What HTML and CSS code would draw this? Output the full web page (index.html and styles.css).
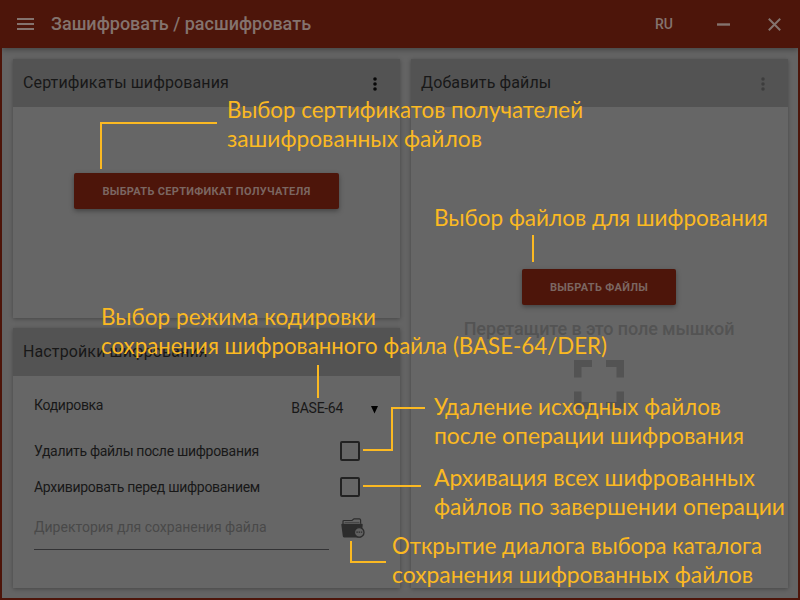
FILE: index.html
```
<!DOCTYPE html>
<html lang="ru">
<head>
<meta charset="utf-8">
<title>Зашифровать / расшифровать</title>
<link rel="stylesheet" href="styles.css">
</head>
<body>
<div class="window">
  <header class="bar">
    <svg class="menu" width="17" height="12" viewBox="0 0 17 12"><path d="M0 1h17M0 6h17M0 11h17" stroke="currentColor" stroke-width="2"/></svg>
    <h1 class="title">Зашифровать / расшифровать</h1>
    <span class="lang">RU</span>
    <svg class="min" width="13" height="13" viewBox="0 0 13 13"><path d="M0 6.500h13" stroke="currentColor" stroke-width="2.400"/></svg>
    <svg class="close" width="13" height="13" viewBox="0 0 13 13"><path d="M.8 .8l11.4 11.4M12.2 .8L.8 12.2" stroke="currentColor" stroke-width="2"/></svg>
  </header>
  <main class="content">
    <div class="column">
      <section class="card certs">
        <div class="card-head"><span>Сертификаты шифрования</span>
          <svg class="dots" width="4" height="14" viewBox="0 0 4 14"><circle cx="2" cy="2" r="1.8"/><circle cx="2" cy="7" r="1.8"/><circle cx="2" cy="12" r="1.8"/></svg>
        </div>
        <div class="certs-body"><button class="btn btn-cert">ВЫБРАТЬ СЕРТИФИКАТ ПОЛУЧАТЕЛЯ</button></div>
      </section>
      <section class="card settings">
        <div class="card-head"><span>Настройки шифрования</span></div>
        <div class="form">
          <div class="row row-encoding"><span>Кодировка</span>
            <span class="select">BASE-64<svg width="7" height="8" viewBox="0 0 7 8"><path d="M0 0h7L3.5 7.5z"/></svg></span>
          </div>
          <div class="row"><span>Удалить файлы после шифрования</span><i class="box"></i></div>
          <div class="row"><span>Архивировать перед шифрованием</span><i class="box"></i></div>
          <div class="directory">
            <span class="field">Директория для сохранения файла</span>
            <svg class="folder" width="24" height="21" viewBox="0 0 24 21">
              <path d="M2 6V3.6Q2 2.5 3.1 2.5H11L13 .9H18.4Q19.5 .9 19.6 2V5.8" fill="none" stroke="#2c2c2c" stroke-width="1.2"/>
              <path d="M3.6 4.4H18.4" stroke="#3c3c3c" stroke-width=".8"/>
              <path d="M.3 6.6Q.2 5.7 1.200 5.7H20.8Q21.8 5.7 21.7 6.7L20.7 18.3Q20.6 19.4 19.5 19.4H3Q1.9 19.4 1.8 18.3Z" fill="#2c2c2c"/>
              <circle cx="18.2" cy="14.4" r="4.800" fill="#606060" stroke="#2c2c2c" stroke-width="1.3"/>
              <path d="M15.4 14.2h5.8" stroke="#2c2c2c" stroke-width="1.2" stroke-dasharray="1.4 .8"/>
            </svg>
          </div>
        </div>
      </section>
    </div>
    <section class="card files">
      <div class="card-head"><span>Добавить файлы</span>
        <svg class="dots muted" width="4" height="14" viewBox="0 0 4 14"><circle cx="2" cy="2" r="1.7"/><circle cx="2" cy="7" r="1.7"/><circle cx="2" cy="12" r="1.7"/></svg>
      </div>
      <div class="drop">
        <button class="btn btn-files">ВЫБРАТЬ ФАЙЛЫ</button>
        <p class="hint">Перетащите в это поле мышкой</p>
        <svg class="frame" width="50" height="49" viewBox="0 0 50 49"><path d="M0 0h18v7H7.5v10.5H0zM32 0h18v17.5h-7.5V7H32zM0 31.5h7.5V42H18v7H0zM42.5 31.5H50V49H32v-7h10.5z"/></svg>
      </div>
    </section>
  </main>
</div>
<svg class="notes" width="800" height="600" viewBox="0 0 800 600">
  <g class="lines">
    <path d="M101 169V123H217"/>
    <path d="M533 235V262"/>
    <path d="M318 365V398"/>
    <path d="M363 450H392V408H425"/>
    <path d="M363 486H421"/>
    <path d="M351 541V562H386"/>
  </g>
  <g class="labels">
    <text x="227" y="118" textLength="356" lengthAdjust="spacingAndGlyphs">Выбор сертификатов получателей</text>
    <text x="227" y="147" textLength="255" lengthAdjust="spacingAndGlyphs">зашифрованных файлов</text>
    <text x="434" y="226" textLength="334" lengthAdjust="spacingAndGlyphs">Выбор файлов для шифрования</text>
    <text x="101" y="325" textLength="275" lengthAdjust="spacingAndGlyphs">Выбор режима кодировки</text>
    <text x="101" y="354" textLength="506" lengthAdjust="spacingAndGlyphs">сохранения шифрованного файла (BASE-64/DER)</text>
    <text x="434" y="415" textLength="287" lengthAdjust="spacingAndGlyphs">Удаление исходных файлов</text>
    <text x="434" y="444" textLength="310" lengthAdjust="spacingAndGlyphs">после операции шифрования</text>
    <text x="434" y="486" textLength="321" lengthAdjust="spacingAndGlyphs">Архивация всех шифрованных</text>
    <text x="434" y="515" textLength="351" lengthAdjust="spacingAndGlyphs">файлов по завершении операции</text>
    <text x="392" y="554" textLength="370" lengthAdjust="spacingAndGlyphs">Открытие диалога выбора каталога</text>
    <text x="392" y="583" textLength="361" lengthAdjust="spacingAndGlyphs">сохранения шифрованных файлов</text>
  </g>
</svg>
</body>
</html>
```
FILE: styles.css
```
* { box-sizing: border-box; }
body { margin: 0; font-family: Roboto, sans-serif; color: #181818; }
.window {
  width: 800px; height: 600px; overflow: hidden;
  display: flex; flex-direction: column;
  background: #646464;
  border: 2px solid #4d150a; border-top: 0;
}
.bar {
  height: 48px; flex: none; display: flex; align-items: center;
  padding: 0 17px 0 15px;
  background: #4d150a; color: #84736e;
  box-shadow: 0 2px 5px rgba(0,0,0,.3);
}
.title { margin: 0 0 0 17px; font-size: 18px; font-weight: 500; line-height: 24px; }
.lang { margin-left: auto; font-size: 14px; font-weight: 500; }
.min { margin-left: 44px; }
.close { margin-left: 38px; }
.content { flex: 1; display: flex; gap: 11px; padding: 11px 10px 10px 11px; }
.column { width: 387px; display: flex; flex-direction: column; gap: 10px; }
.card { background: #666; box-shadow: 0 1px 4px rgba(0,0,0,.3); display: flex; flex-direction: column; }
.certs { height: 259px; }
.settings { height: 260px; }
.files { width: 377px; }
.card-head {
  height: 48px; flex: none; display: flex; align-items: center; justify-content: space-between;
  padding: 0 23px 0 10px; background: #535353; font-size: 16px; letter-spacing: .12px;
}
.card-head span { margin-bottom: 2px; }
.dots { fill: #080808; margin-top: 2px; }
.dots.muted { fill: #3d3d3d; }
.certs-body { padding-top: 66px; padding-left: 61px; }
.btn {
  height: 36px; padding: 0; border: 0; border-radius: 2px;
  background: #4d150a; color: #7b6661;
  font: 700 11px Roboto, sans-serif; letter-spacing: .3px; white-space: nowrap;
  box-shadow: 0 2px 5px rgba(0,0,0,.35);
}
.btn-cert { width: 265px; }
.btn-files { width: 154px; }
.drop { display: flex; flex-direction: column; align-items: center; padding: 162px 1px 0 0; }
.hint { margin: 12px 0 0; font-size: 18px; font-weight: 500; line-height: 24px; letter-spacing: -.1px; color: #535353; white-space: nowrap; }
.frame { margin-top: 19px; fill: #535353; }
.form { padding: 11px 40px 0 21px; font-size: 14px; }
.row { height: 36px; display: flex; align-items: center; justify-content: space-between; letter-spacing: -.3px; }
.row-encoding { height: 46px; align-items: flex-start; padding-top: 10px; }
.select { display: flex; align-items: center; gap: 28px; margin: 3px -18px 0 0; }
.select svg { margin-top: 4px; }
.box { width: 20px; height: 20px; border: 2px solid #222; border-radius: 2px; }
.directory { display: flex; justify-content: space-between; margin-top: 9px; }
.field {
  width: 295px; height: 36px; padding-top: 3px; line-height: 20px;
  border-bottom: 1px solid #333335; color: #494949;
}
.folder { margin: 4px -5px 0 0; }
.notes { position: absolute; inset: 0; }
.lines { fill: none; stroke: #fbb922; stroke-width: 2; }
.labels { fill: #fbb922; font: 22.5px Lato, "Noto Sans", sans-serif; }
```
